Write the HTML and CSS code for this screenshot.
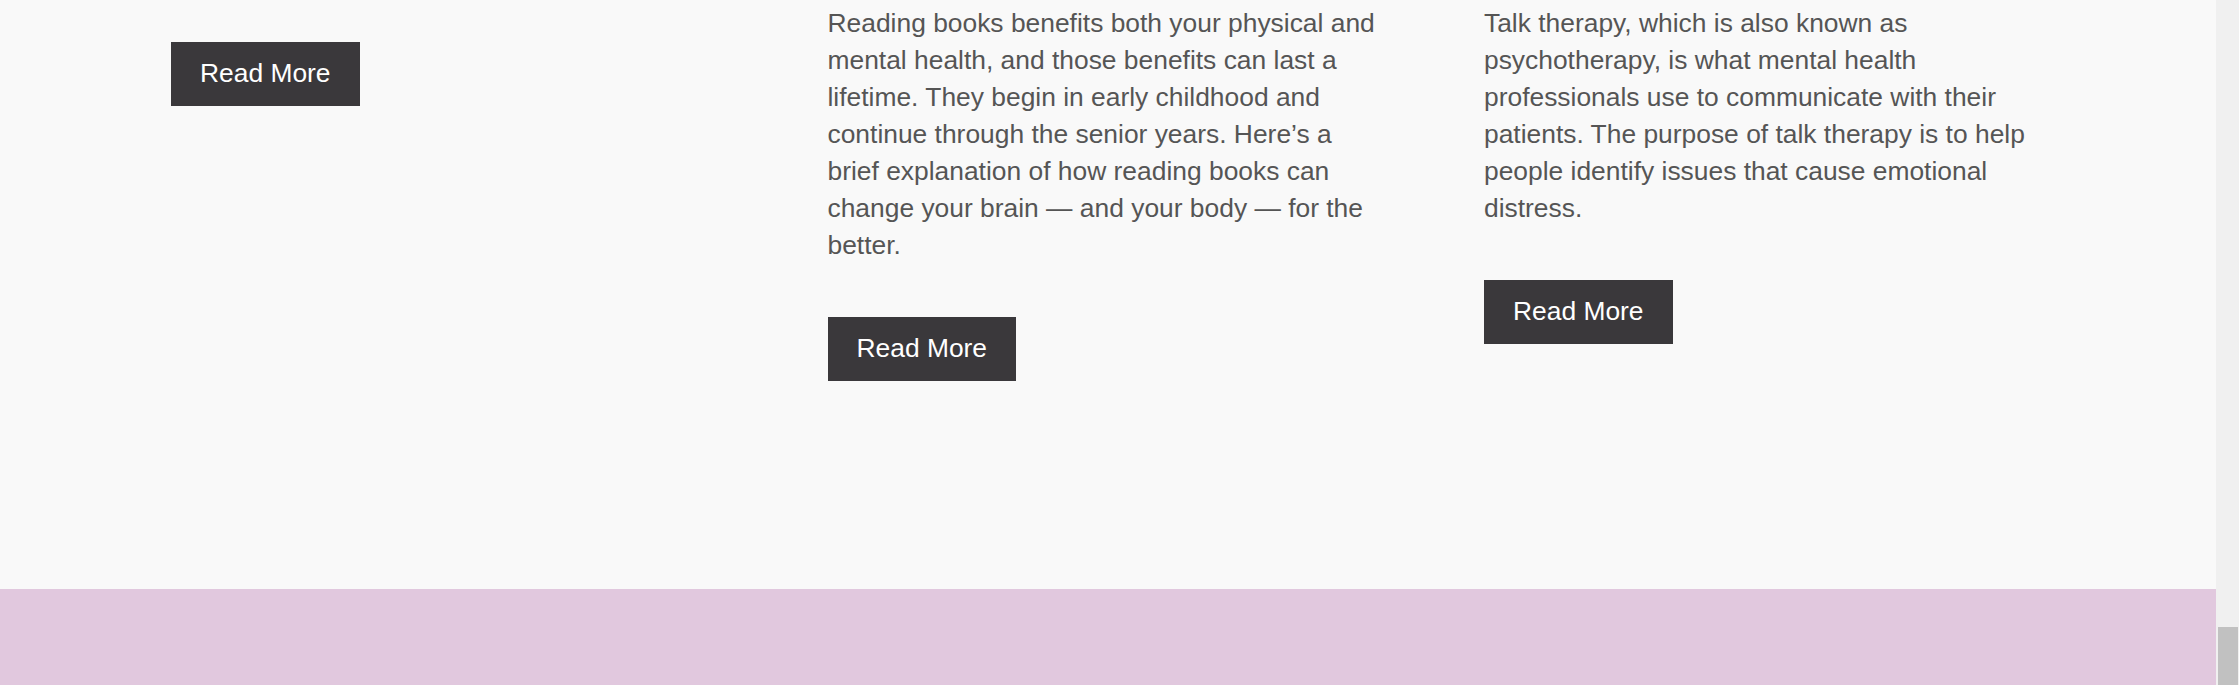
FILE: index.html
```html
<!DOCTYPE html>
<html lang="en">
<head>
<meta charset="utf-8">
<title>Articles</title>
<link rel="stylesheet" href="styles.css">
</head>
<body>
  <div class="viewport">
    <main class="page">
      <section class="cards">
        <article class="card card--tail">
          <a class="btn" href="#">Read More</a>
        </article>
        <article class="card">
          <p class="card__text">Reading books benefits both your physical and mental health, and those benefits can last a lifetime. They begin in early childhood and continue through the senior years. Here’s a brief explanation of how reading books can change your brain — and your body — for the better.</p>
          <a class="btn" href="#">Read More</a>
        </article>
        <article class="card">
          <p class="card__text">Talk therapy, which is also known as psychotherapy, is what mental health professionals use to communicate with their patients. The purpose of talk therapy is to help people identify issues that cause emotional distress.</p>
          <a class="btn" href="#">Read More</a>
        </article>
      </section>
      <footer class="footer"></footer>
    </main>
    <div class="scrollbar"><div class="scrollbar__thumb"></div></div>
  </div>
</body>
</html>
```

FILE: styles.css
```css
html, body {
  margin: 0;
  padding: 0;
  height: 685px;
  overflow: hidden;
}

body {
  font-family: "Liberation Sans", Arial, sans-serif;
  background: #f9f9f9;
}

.viewport {
  display: flex;
  height: 685px;
}

.page {
  flex: 1;
  display: flex;
  flex-direction: column;
  background: #f9f9f9;
  min-width: 0;
}

.cards {
  box-sizing: border-box;
  height: 589px;
  padding: 5px 0 0 171px;
  display: grid;
  grid-template-columns: repeat(3, 552px);
  column-gap: 104.5px;
  align-items: start;
}

.card {
  display: flex;
  flex-direction: column;
  align-items: flex-start;
}

.card--tail {
  padding-top: 37px;
}

.card__text {
  margin: 0 0 53px;
  font-size: 26.4px;
  line-height: 37px;
  color: #555555;
}

.btn {
  display: inline-block;
  background: #3a383b;
  color: #ffffff;
  text-decoration: none;
  font-size: 26.4px;
  line-height: 37px;
  padding: 13px 29px 14px;
}

.footer {
  flex: 1;
  background: #e1c8de;
}

.scrollbar {
  width: 23px;
  background: #f0f0f0;
  display: flex;
  flex-direction: column;
  justify-content: flex-end;
  align-items: flex-end;
}

.scrollbar__thumb {
  width: 20px;
  height: 58px;
  margin-right: 1px;
  background: #c1c1c1;
}
```
